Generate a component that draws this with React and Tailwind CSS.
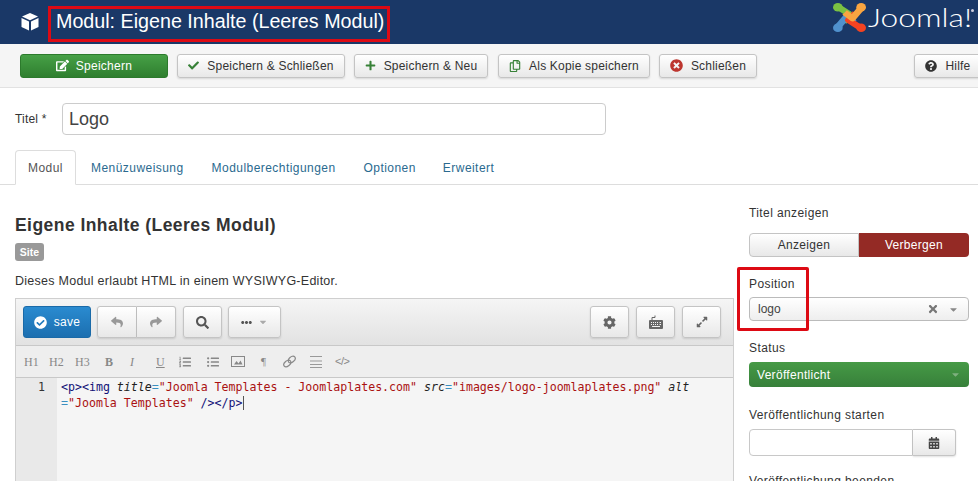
import { FaCheck, FaPlus, FaRegCopy, FaTimesCircle, FaQuestionCircle, FaReply, FaShare, FaSearch, FaEllipsisH, FaCog, FaExpandAlt, FaCalendarAlt, FaEdit, FaCheckCircle, FaCaretDown, FaTimes, FaListUl, FaListOl } from "react-icons/fa";

const sans = "font-['Liberation_Sans',Arial,sans-serif]";
const btn = "flex shrink-0 items-center justify-center rounded-[3px] border border-[#c4c4c4] bg-gradient-to-b from-white to-[#e8e8e8] shadow-[0_1px_2px_rgba(0,0,0,0.12)]";

function LogoArm({ color, angle }) {
  return (
    <g transform={`rotate(${angle} 17 17)`}>
      <path d="M6 5 L18 14 L11 22" stroke={color} strokeWidth="7" />
      <circle cx="5" cy="5" r="5" fill={color} />
    </g>
  );
}

function Logo() {
  return (
    <div className="flex w-[145px] items-start self-start pt-[3px]">
      <svg width="33" height="29" viewBox="0 0 34 34" preserveAspectRatio="none" fill="none" strokeLinejoin="round">
        <LogoArm color="#7ac143" angle={0} />
        <LogoArm color="#5091cd" angle={270} />
        <LogoArm color="#f44321" angle={180} />
        <LogoArm color="#f9a541" angle={90} />
      </svg>
      <span className="ml-[2px] mt-[2px] origin-left scale-x-[1.27] font-['Lato',sans-serif] text-[25px] font-light leading-[25px] text-white">Joomla!</span>
      <span className="absolute left-[971px] top-[9px] h-[3px] w-[3px] rounded-full bg-[#ccd]"></span>
    </div>
  );
}

function ToolButton({ icon, label, className }) {
  return (
    <button className={`${btn} h-[24px] gap-[8px] text-[12px] tracking-[0.2px] text-[#333] ${className}`}>
      {icon}
      {label}
    </button>
  );
}

function EditorButton({ children, className }) {
  return <button className={`${btn} h-[32px] text-[#555] ${className}`}>{children}</button>;
}

function Tag({ children }) {
  return <span className="text-[#117]">{children}</span>;
}
function Attr({ children }) {
  return <span className="italic text-[#222]">{children}</span>;
}
function Str({ children }) {
  return <span className="text-[#a11]">{children}</span>;
}
function Eq() {
  return <span className="text-[#3a8fc0]">=</span>;
}

function FormatBar() {
  const serif = "font-['Liberation_Serif',serif] text-[12px] text-[#888]";
  return (
    <div className="flex h-[32px] items-center bg-[#eeeeee] border-b border-[#c8c8c8] pl-[8px] text-[#888]">
      <span className={`${serif} w-[25px]`}>H1</span>
      <span className={`${serif} w-[26px]`}>H2</span>
      <span className={`${serif} w-[30px]`}>H3</span>
      <span className={`${serif} w-[25px] font-bold`}>B</span>
      <span className={`${serif} w-[26px] italic`}>I</span>
      <span className={`${serif} w-[23px] underline`}>U</span>
      <span className="w-[28px]"><FaListOl size={12} /></span>
      <span className="w-[24px]"><FaListUl size={12} /></span>
      <span className="w-[30px]">
        <svg width="14" height="11" viewBox="0 0 14 11" fill="none" stroke="#888">
          <rect x="0.5" y="0.5" width="13" height="10" />
          <path d="M3 8.5 L5.5 5 L7.5 7.5 L9.5 4.5 L11.500 8.5 Z" fill="#888" stroke="none" />
        </svg>
      </span>
      <span className="w-[22px] font-['Liberation_Serif',serif] text-[11px]">¶</span>
      <span className="w-[27px]">
        <svg width="13" height="13" viewBox="0 0 13 13" fill="none" stroke="#888" strokeWidth="1.2">
          <ellipse cx="4.3" cy="8.5" rx="4" ry="2.6" transform="rotate(-40 4.3 8.5)" />
          <ellipse cx="8.7" cy="4.5" rx="4" ry="2.6" transform="rotate(-40 8.7 4.5)" />
        </svg>
      </span>
      <span className="w-[25px]">
        <svg width="12" height="14" viewBox="0 0 12 14" stroke="#999">
          <path d="M0 1.5h12M0 6h12M0 9.5h12M0 12.5h12" />
        </svg>
      </span>
      <span className="text-[11px] tracking-[-0.5px]">&lt;/&gt;</span>
    </div>
  );
}

function Editor() {
  return (
    <div className="mt-[10px] w-[719px] border-x border-t border-[#cfcfcf]">
      <div className="flex h-[47px] items-center justify-between border-b border-[#c8c8c8] bg-gradient-to-b from-[#f5f5f5] to-[#e2e2e2] pl-[7px] pr-[12px]">
        <div className="flex items-center">
          <button className="flex h-[32px] w-[68px] items-center justify-center gap-[7px] rounded-[3px] border border-[#1a6aa8] bg-gradient-to-b from-[#2a8bd0] to-[#1c6fb0] text-[12px] tracking-[0.3px] text-white">
            <FaCheckCircle size={13} />
            save
          </button>
          <div className="ml-[6px] flex">
            <EditorButton className="w-[40px] rounded-r-none text-[#999]"><FaReply size={12} /></EditorButton>
            <EditorButton className="w-[39px] rounded-l-none border-l-0 text-[#999]"><FaShare size={12} /></EditorButton>
          </div>
          <EditorButton className="ml-[7px] w-[39px]"><FaSearch size={13} /></EditorButton>
          <EditorButton className="ml-[6px] w-[53px] gap-[6px]"><FaEllipsisH size={11} /><FaCaretDown size={10} className="text-[#aaa]" /></EditorButton>
        </div>
        <div className="flex items-center gap-[7px]">
          <EditorButton className="w-[39px]"><FaCog size={13} className="text-[#666]" /></EditorButton>
          <EditorButton className="w-[39px]">
            <svg width="14" height="15" viewBox="0 0 14 15" fill="#666">
              <path d="M3 5 V2.500 H6 V0.500" fill="none" stroke="#666" />
              <path fillRule="evenodd" d="M1 5h12a1 1 0 0 1 1 1v7a1 1 0 0 1-1 1H1a1 1 0 0 1-1-1V6a1 1 0 0 1 1-1zM2 7v1h1V7zM4 7v1h1V7zM6 7v1h1V7zM8 7v1h1V7zM10.500 7v1h1.500V7zM2 9v1h1V9zM4 9v1h1V9zM6 9v1h1V9zM8 9v1h1V9zM10.500 9v1h1.500V9zM3 11v1h8v-1z" />
            </svg>
          </EditorButton>
          <EditorButton className="w-[39px]"><FaExpandAlt size={12} className="text-[#666]" /></EditorButton>
        </div>
      </div>
      <FormatBar />
      <div className="flex h-[110px] bg-[#f5f5f5]">
        <div className="w-[41px] bg-[#e9e9e9] pr-[12px] pt-[1px] text-right font-['DejaVu_Sans_Mono',monospace] text-[11.6px] leading-[16px] text-[#333]">1</div>
        <div className="flex-1 pl-[4px] pt-[1px] font-['DejaVu_Sans_Mono',monospace] text-[11.6px] leading-[16px]">
          <div className="whitespace-pre">
            <Tag>&lt;p&gt;&lt;img</Tag> <Attr>title</Attr><Eq /><Str>"Joomla Templates - Joomlaplates.com"</Str> <Attr>src</Attr><Eq /><Str>"images/logo-joomlaplates.png"</Str> <Attr>alt</Attr>
          </div>
          <div className="whitespace-pre">
            <Eq /><Str>"Joomla Templates"</Str> <Tag>/&gt;&lt;/p&gt;</Tag><span className="border-l border-[#555]"></span>
          </div>
        </div>
      </div>
    </div>
  );
}

function Sidebar() {
  const label = "text-[12px] tracking-[0.4px] text-[#333] leading-[14px]";
  return (
    <div className={`w-[220px] pt-[21px] ${sans}`}>
      <div className={label}>Titel anzeigen</div>
      <div className="mt-[13px] flex h-[24px] text-[12px] tracking-[0.3px]">
        <div className="flex w-[110px] items-center justify-center rounded-l-[4px] border border-[#c4c4c4] bg-gradient-to-b from-white to-[#e8e8e8] text-[#333]">Anzeigen</div>
        <div className="flex flex-1 items-center justify-center rounded-r-[4px] bg-[#942a25] text-white">Verbergen</div>
      </div>
      <div className={`${label} mt-[20px]`}>Position</div>
      <div className="mt-[6px] flex h-[24px] items-center rounded-[4px] border border-[#bbb] bg-gradient-to-b from-white to-[#eeeeee] pl-[8px] pr-[9px] text-[12px] text-[#444]">
        <span className="flex-1">logo</span>
        <FaTimes size={12} className="text-[#777]" />
        <FaCaretDown size={11} className="ml-[9px] text-[#888]" />
      </div>
      <div className={`${label} mt-[20px]`}>Status</div>
      <div className="mt-[7px] flex h-[25px] items-center rounded-[4px] bg-gradient-to-b from-[#469a46] to-[#37803a] pl-[8px] pr-[8px] text-[12px] tracking-[0.3px] text-white">
        <span className="flex-1">Veröffentlicht</span>
        <FaCaretDown size={11} className="text-[#7fb07f]" />
      </div>
      <div className={`${label} mt-[21px]`}>Veröffentlichung starten</div>
      <div className="mt-[7px] flex h-[27px] w-[207px]">
        <div className="flex-1 rounded-l-[4px] border border-[#c8c8c8] bg-white" />
        <div className={`${btn} w-[43px] rounded-l-none border-l-0 text-[#444]`}><FaCalendarAlt size={12} /></div>
      </div>
      <div className={`${label} mt-[18px]`}>Veröffentlichung beenden</div>
    </div>
  );
}

export default function App() {
  return (
    <div className={`relative h-[481px] w-[978px] overflow-hidden bg-white ${sans}`}>
      <header className="flex h-[44px] items-center justify-between bg-[#1a3867] pl-[21px]">
        <div className="flex items-center gap-[17px]">
          <svg width="18" height="18" viewBox="0 0 18 18" fill="white">
            <path d="M9 0 L17 3.6 L9 7.2 L1 3.6 Z" />
            <path d="M0.5 5 L8 8.5 V17.5 L0.5 14 Z" />
            <path d="M17.5 5 L10 8.5 V17.5 L17.5 14 Z" />
          </svg>
          <h1 className="text-[19.7px] leading-none text-white">Modul: Eigene Inhalte (Leeres Modul)</h1>
        </div>
        <Logo />
      </header>

      <div className="flex h-[44px] items-center border-b border-[#e2e2e2] bg-[#f5f5f5] pl-[20px]">
        <button className="flex h-[24px] w-[148px] shrink-0 items-center justify-center gap-[7px] rounded-[3px] border border-[#2c7a2c] bg-gradient-to-b from-[#46a046] to-[#2f7f2f] text-[12px] tracking-[0.25px] text-white">
          <FaEdit size={13} />
          Speichern
        </button>
        <ToolButton className="ml-[9px] w-[168px]" icon={<FaCheck size={11} className="text-[#378137]" />} label="Speichern & Schließen" />
        <ToolButton className="ml-[9px] w-[134px]" icon={<FaPlus size={11} className="text-[#378137]" />} label="Speichern & Neu" />
        <ToolButton className="ml-[10px] w-[152px]" icon={<FaRegCopy size={12} className="text-[#378137]" />} label="Als Kopie speichern" />
        <ToolButton className="ml-[9px] w-[98px]" icon={<FaTimesCircle size={13} className="text-[#bd362f]" />} label="Schließen" />
        <ToolButton className="ml-[157px] w-[68px]" icon={<FaQuestionCircle size={12} className="text-[#333]" />} label="Hilfe" />
      </div>

      <div className="flex items-center pl-[15px] pt-[15px]">
        <label className="w-[47px] text-[12px] tracking-[0.2px] text-[#333]">Titel *</label>
        <div className="flex h-[32px] w-[544px] items-center rounded-[4px] border border-[#ccc] pl-[6px] pt-[1px] text-[18px] text-[#444]">Logo</div>
      </div>

      <nav className="mt-[15px] flex h-[35px] border-b border-[#ddd] pl-[15px] text-[12px] tracking-[0.45px] text-[#2a6a8f]">
        <div className="-mb-px flex w-[61px] items-center justify-center rounded-t-[4px] border border-b-white border-[#ddd] bg-white pt-[1px] text-[#555]">Modul</div>
        <div className="ml-[15px] flex items-center pt-[1px]">Menüzuweisung</div>
        <div className="ml-[28px] flex items-center pt-[1px]">Modulberechtigungen</div>
        <div className="ml-[28px] flex items-center pt-[1px]">Optionen</div>
        <div className="ml-[27px] flex items-center pt-[1px]">Erweitert</div>
      </nav>

      <div className="flex">
        <main className="w-[734px] pl-[15px] pt-[31px]">
          <h2 className="text-[17.5px] font-bold leading-[18px] tracking-[0.45px] text-[#333]">Eigene Inhalte (Leeres Modul)</h2>
          <span className="mt-[9px] block w-[29px] rounded-[3px] bg-[#999] text-center text-[10.5px] font-bold leading-[18px] text-white">Site</span>
          <p className="mt-[13px] text-[12.5px] leading-[14px] tracking-[0.26px] text-[#333]">Dieses Modul erlaubt HTML in einem WYSIWYG-Editor.</p>
          <Editor />
        </main>
        <div className="pl-[15px]">
          <Sidebar />
        </div>
      </div>

      {/* rote Markierungen */}
      <div className="absolute left-[48px] top-[6px] h-[36px] w-[342px] border-[3px] border-[#dd0a14]" />
      <div className="absolute left-[737px] top-[267px] h-[64px] w-[72px] rounded-[2px] border-[3px] border-[#dd0a14]" />
    </div>
  );
}
